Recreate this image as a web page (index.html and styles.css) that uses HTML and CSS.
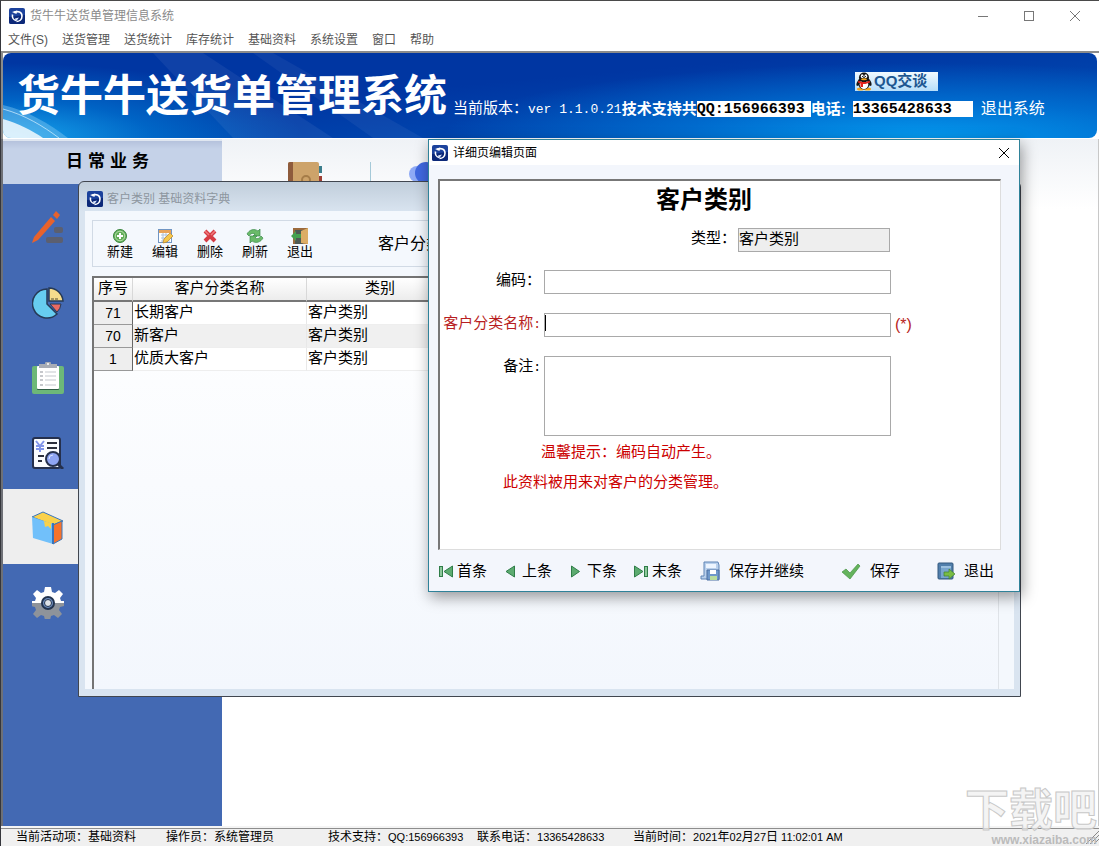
FILE: index.html
```
<!DOCTYPE html>
<html lang="zh-CN">
<head>
  <meta charset="utf-8">
  <title>货牛牛送货单管理信息系统</title>
  <link rel="stylesheet" href="styles.css">
</head>
<body>
  <!-- shared application logo -->
  <svg class="defs" width="0" height="0">
    <symbol id="app-logo" viewBox="0 0 16 16">
      <rect width="16" height="16" rx="2" fill="#1c429c"/>
      <path d="M0 9 16 7v7a2 2 0 0 1-2 2H2a2 2 0 0 1-2-2z" fill="#0c2878"/>
      <path d="M5 4.500C9 2.500 13 4 13 8s-3 5.500-5.500 5.500" fill="none" stroke="#fff" stroke-width="1.600"/>
      <path d="M3.500 6.500C3 9.500 4.500 12 7 12.500" fill="none" stroke="#fff" stroke-width="1.600"/>
      <path d="M3 4 8 2.500 7.500 6z" fill="#fff"/>
      <path d="M10 9.500 7 13.500l-1-3z" fill="#dce8ff"/>
    </symbol>
  </svg>

  <div class="app">
    <header class="titlebar">
      <svg class="logo"><use href="#app-logo"/></svg>
      <h1 class="app-title">货牛牛送货单管理信息系统</h1>
      <div class="window-buttons">
        <button type="button" aria-label="最小化"><svg width="12" height="12"><path d="M1 6.500h10" stroke="#777"/></svg></button>
        <button type="button" aria-label="最大化"><svg width="12" height="12"><rect x="1.500" y="1.500" width="9" height="9" fill="none" stroke="#777"/></svg></button>
        <button type="button" aria-label="关闭"><svg width="12" height="12"><path d="m1 1 10 10M11 1 1 11" stroke="#777"/></svg></button>
      </div>
    </header>

    <nav class="menubar">
      <a href="#">文件(S)</a>
      <a href="#">送货管理</a>
      <a href="#">送货统计</a>
      <a href="#">库存统计</a>
      <a href="#">基础资料</a>
      <a href="#">系统设置</a>
      <a href="#">窗口</a>
      <a href="#">帮助</a>
    </nav>

    <div class="banner-wrap">
      <section class="banner">
        <svg class="banner-light" viewBox="0 0 460 85" preserveAspectRatio="none">
          <path d="M150 0h50l130 85H230z" fill="#fff" opacity=".06"/>
          <path d="M250 0h20l150 85h-50z" fill="#fff" opacity=".05"/>
          <path d="M0 52C25 58 45 70 65 85H0z" fill="#8fd0f4" opacity=".4"/>
          <path d="M0 66C15 70 30 78 40 85H0z" fill="#fff" opacity=".8"/>
          <path d="M0 56C22 62 40 73 56 85" fill="none" stroke="#d8f2ff" opacity=".7"/>
        </svg>
        <h2 class="banner-title">货牛牛送货单管理系统</h2>
        <div class="banner-info">
          <a class="qq-chat" href="#">
            <svg width="18" height="19" viewBox="0 0 18 19">
              <ellipse cx="5.500" cy="17" rx="3.500" ry="1.500" fill="#f3a51c"/>
              <ellipse cx="12.500" cy="17" rx="3.500" ry="1.500" fill="#f3a51c"/>
              <path d="M4 7C1 11 1 13 2 14c1 0 2-1 2-1h10s1 1 2 1c1-1 1-4-2-7z" fill="#151515"/>
              <ellipse cx="9" cy="11" rx="6" ry="6.500" fill="#151515"/>
              <ellipse cx="9" cy="12.500" rx="4.300" ry="4.600" fill="#fff"/>
              <ellipse cx="9" cy="5.500" rx="5" ry="5" fill="#151515"/>
              <ellipse cx="7.200" cy="4.200" rx="1.400" ry="1.900" fill="#fff"/>
              <ellipse cx="10.800" cy="4.200" rx="1.400" ry="1.900" fill="#fff"/>
              <circle cx="7.600" cy="4.500" r=".6"/><circle cx="10.400" cy="4.500" r=".6"/>
              <ellipse cx="9" cy="7.200" rx="3" ry="1" fill="#f3a51c"/>
              <path d="M3.500 8.500c3 2 8 2 11 0l.5 2c-2 1-5 1.700-7 1.500v3H5.500v-3.500L3 10.500z" fill="#e3231d"/>
            </svg>
            <span>QQ交谈</span>
          </a>
          <div class="banner-line">
            <span class="version">当前版本：<span class="mono">ver 1.1.0.21</span></span>
            <b class="support">技术支持共</b>
            <span class="number-box qq">QQ:156966393</span>
            <b class="phone">电话:</b>
            <span class="number-box tel">13365428633</span>
            <a class="logout" href="#">退出系统</a>
          </div>
        </div>
      </section>
    </div>

    <main class="desktop">
      <aside class="sidebar">
        <h3 class="sidebar-title">日常业务</h3>
        <nav class="sidebar-nav">
          <a href="#" aria-label="送货管理">
            <svg width="32" height="34" viewBox="0 0 32 34">
              <path d="M0 32 2 26 19 6l4 4L6 29z" fill="#e8622c"/>
              <path d="m21 4 3-4 4 4-3 4z" fill="#e8622c"/>
              <rect x="22" y="16" width="9" height="6" rx="2" fill="#5b5f70"/>
              <rect x="14" y="26" width="17" height="6" rx="2" fill="#5b5f70"/>
            </svg>
          </a>
          <a href="#" aria-label="送货统计">
            <svg width="32" height="32" viewBox="0 0 32 32">
              <path d="M15 2A14.500 14.500 0 1 0 25 27L15 17z" fill="#67cdf0" stroke="#263a57" stroke-width="1.500"/>
              <path d="M17 1v13h14A14 14 0 0 0 17 1z" fill="#f6dc8c" stroke="#263a57" stroke-width="1.500"/>
              <path d="M18 17h11a12 12 0 0 1-4 8z" fill="#ea6a62" stroke="#263a57"/>
              <path d="M19 12h8" stroke="#8b7d4f" stroke-width="1.500" stroke-dasharray="3 1"/>
            </svg>
          </a>
          <a href="#" aria-label="库存统计">
            <svg width="32" height="32" viewBox="0 0 32 32">
              <rect x="0" y="4" width="32" height="28" rx="2" fill="#6db878"/>
              <rect x="5" y="5" width="22" height="23" rx="1" fill="#315e46"/>
              <rect x="5" y="4" width="22" height="23" rx="1" fill="#fff"/>
              <path d="M7 2h6a3 3 0 0 1 6 0h6v4H7z" fill="#a7acb5"/>
              <circle cx="16" cy="2" r="1" fill="#fff"/>
              <path d="M8 10h3M8 14h3M8 18h3M8 23h3" stroke="#c6c8cc" stroke-width="2"/>
              <path d="M13 10h11M13 14h11M13 18h11M13 23h11" stroke="#d8dade" stroke-width="1.500"/>
            </svg>
          </a>
          <a href="#" aria-label="基础资料">
            <svg width="32" height="32" viewBox="0 0 32 32">
              <rect x="1" y="1" width="27" height="30" rx="2" fill="#fafcff" stroke="#25304d" stroke-width="2"/>
              <path d="m4 4 4 5 4-5M8 9v6M4 9h8M4 12h8" fill="none" stroke="#8195ea" stroke-width="2"/>
              <path d="M15 6h10M15 11h10M6 19h6M6 24h4" stroke="#2b2f3d" stroke-width="2"/>
              <path d="m25 26 6 6" stroke="#25304d" stroke-width="3"/>
              <circle cx="21" cy="22" r="7" fill="#8fa5f3" stroke="#25304d" stroke-width="2"/>
              <path d="M17 22a4 4 0 0 1 4-4" fill="none" stroke="#dce4ff"/>
            </svg>
          </a>
          <a class="active" href="#" aria-label="资料字典">
            <svg width="32" height="34" viewBox="0 0 32 34">
              <path d="M0 6 11 1l20 9-10 4z" fill="#fad14b" stroke="#3976bd"/>
              <path d="M0 6 21 13v20L1 27z" fill="#71c0fa"/>
              <path d="m21 14 9-4v18l-9 5z" fill="#f7732b" stroke="#3976bd"/>
              <path d="M21 12v21" stroke="#3976bd" stroke-width="2"/>
              <path d="m12 10 7 2v6l-3-3-3 1z" fill="#fad14b"/>
            </svg>
          </a>
          <a href="#" aria-label="系统设置">
            <svg width="32" height="32" viewBox="0 0 32 32">
              <defs><linearGradient id="gear" x2="0" y2="1"><stop offset=".5" stop-color="#fff"/><stop offset=".5" stop-color="#8e939a"/></linearGradient></defs>
              <path d="M13 0h6l1 5 3 1 4-3 4 4-3 4 1 3 3 0v5l-4 1-1 3 3 4-4 4-4-3-3 1-1 4h-5l-1-4-3-1-4 3-4-4 3-4-1-3-4-1v-5l4 0 1-3-3-4 4-4 4 3 3-1z" fill="url(#gear)"/>
              <circle cx="16" cy="16" r="6" fill="#6f8fc0" stroke="#23344f" stroke-width="2"/>
              <circle cx="16" cy="16" r="3.500" fill="#dfe3e8" stroke="#23344f"/>
            </svg>
          </a>
        </nav>
      </aside>

      <div class="workspace">
        <svg width="34" height="36" viewBox="0 0 34 36">
          <path d="M29 4h5v7h-5zM29 14h5v7h-5z" fill="#3b7d8c"/>
          <path d="M29 14h5v5h-5z" fill="#9c3f35"/>
          <rect width="31" height="36" rx="2" fill="#cda36a"/>
          <path d="M2 0h3v36H2a2 2 0 0 1-2-2V2a2 2 0 0 1 2-2z" fill="#8e5b3c"/>
          <circle cx="18" cy="18" r="4" fill="none" stroke="#a57c48" stroke-width="2"/>
        </svg>
        <span class="divider"></span>
        <svg width="40" height="36" viewBox="0 0 40 36">
          <circle cx="8" cy="12" r="8" fill="#8faaf5"/>
          <circle cx="17" cy="11" r="11" fill="#4068e0"/>
        </svg>
      </div>

      <!-- dictionary window -->
      <section class="dict-window">
        <header class="dict-titlebar">
          <svg class="logo"><use href="#app-logo"/></svg>
          <h3>客户类别 基础资料字典</h3>
        </header>
        <div class="dict-body">
          <div class="toolbar">
            <button type="button">
              <svg width="16" height="16"><circle cx="8" cy="8" r="6.500" fill="#62ae58" stroke="#3b8740"/><circle cx="8" cy="8" r="4.800" fill="none" stroke="#b7e0ad"/><path d="M8 5v6M5 8h6" stroke="#fff" stroke-width="2"/></svg>
              新建
            </button>
            <button type="button">
              <svg width="16" height="16"><rect x="1.500" y="1.500" width="13" height="13" fill="#fff" stroke="#7095c3"/><path d="M2 2h12v3H2z" fill="#e8a35b"/><path d="M4 7h9M4 10h9M4 13h9M6 5v9M9 5v9" stroke="#adc2dd"/><path d="m6 15 1-4 6-6 3 3-6 6z" fill="#f6c84c" stroke="#b88326" stroke-width=".7"/></svg>
              编辑
            </button>
            <button type="button">
              <svg width="16" height="16"><path d="m3 3 10 10M13 3 3 13" stroke="#d63c44" stroke-width="4"/><path d="m3 3 4 4M13 3 9 7" stroke="#ef7b7d" stroke-width="1.500"/></svg>
              删除
            </button>
            <button type="button">
              <svg width="18" height="16"><path d="M1 6c2-4 7-6 11-3l2-2v7H7l2-2C7 5 5 5 3 8z" fill="#6aba69" stroke="#3b8a4a" stroke-width=".7"/><path d="M17 10c-2 4-7 6-11 3l-2 2V8h7l-2 2c2 1 4 1 6-2z" fill="#6aba69" stroke="#3b8a4a" stroke-width=".7"/></svg>
              刷新
            </button>
            <button type="button">
              <svg width="18" height="16"><path d="M2 0h15v16H2z" fill="#9b6a3c"/><path d="M4 2h8v14H4z" fill="#4e5a54"/><path d="m10 3 7-3v16l-7-1z" fill="#dcad65"/><path d="m0 8 5-5v3h5v4H5v3z" fill="#45a04e"/></svg>
              退出
            </button>
            <span class="toolbar-label">客户分类名称：</span>
          </div>
          <div class="grid">
            <table>
              <thead>
                <tr><th class="no">序号</th><th class="name">客户分类名称</th><th class="type">类别</th><th></th></tr>
              </thead>
              <tbody>
                <tr><td class="no">71</td><td>长期客户</td><td>客户类别</td><td></td></tr>
                <tr class="alt"><td class="no">70</td><td>新客户</td><td>客户类别</td><td></td></tr>
                <tr><td class="no">1</td><td>优质大客户</td><td>客户类别</td><td></td></tr>
              </tbody>
            </table>
          </div>
        </div>
      </section>

      <!-- edit dialog -->
      <section class="dialog">
        <header class="dialog-titlebar">
          <svg class="logo"><use href="#app-logo"/></svg>
          <h3>详细页编辑页面</h3>
          <button type="button" aria-label="关闭"><svg width="12" height="12"><path d="m1 1 10 10M11 1 1 11" stroke="#000"/></svg></button>
        </header>
        <form class="panel">
          <h2>客户类别</h2>
          <div class="type-row">
            <label for="type">类型：</label>
            <input id="type" type="text" value="客户类别" readonly>
          </div>
          <div class="field">
            <label for="code">编码：</label>
            <input id="code" type="text">
          </div>
          <div class="field required">
            <label for="name">客户分类名称<span class="mono">:</span></label>
            <div class="input-wrap">
              <input id="name" type="text">
              <span class="caret"></span>
            </div>
            <span class="star">(*)</span>
          </div>
          <div class="field">
            <label for="remark">备注<span class="mono">:</span></label>
            <textarea id="remark"></textarea>
          </div>
          <p class="tip first">温馨提示：编码自动产生。</p>
          <p class="tip">此资料被用来对客户的分类管理。</p>
        </form>
        <footer class="dialog-buttons">
          <div class="record-nav">
            <button type="button"><svg width="16" height="16"><rect x="1.500" y="3.500" width="3" height="10" fill="#8cc79a" stroke="#2f7d48"/><path d="M14.500 3v11L6 8.500z" fill="#5cab70" stroke="#2f7d48"/></svg>首条</button>
            <button type="button"><svg width="16" height="16"><path d="M11.500 3v11L3 8.500z" fill="#5cab70" stroke="#2f7d48"/></svg>上条</button>
            <button type="button"><svg width="16" height="16"><path d="M3.500 3v11l8-5.500z" fill="#5cab70" stroke="#2f7d48"/></svg>下条</button>
            <button type="button"><svg width="16" height="16"><path d="M1.500 3v11L10 8.500z" fill="#5cab70" stroke="#2f7d48"/><rect x="11.500" y="3.500" width="3" height="10" fill="#8cc79a" stroke="#2f7d48"/></svg>末条</button>
          </div>
          <div class="save-nav">
            <button type="button">
              <svg width="20" height="20"><path d="M4 1h14l1 3v14H1v-3h3z" fill="#b9d0ec" stroke="#5f84b5"/><path d="M6 3h10v4H6z" fill="#edf5ff"/><path d="M7 9h12v10H7z" fill="#6f98ca" stroke="#4a6fa1"/><path d="M10 9h6v4h-6z" fill="#fff"/><path d="M10 15h7v4h-7z" fill="#b9dc9d"/></svg>保存并继续
            </button>
            <button type="button">
              <svg width="20" height="20"><path d="m1 11 4-3 4 4 8-9 2 2L9 18z" fill="#64b35c" stroke="#479245" stroke-width=".7"/></svg>保存
            </button>
            <button type="button">
              <svg width="18" height="20"><rect x="1" y="2" width="15" height="16" rx="1" fill="#517fac" stroke="#32587f"/><path d="M4 5h10v12H4z" fill="#78a5cd"/><path d="M4 5h10v2H4z" fill="#9bc0df"/><path d="M7 11h5V8l6 5-6 5v-3H7z" fill="#79bc43" stroke="#40832f" stroke-width=".7"/></svg>退出
            </button>
          </div>
        </footer>
      </section>
    </main>

    <footer class="statusbar">
      <span class="activity">当前活动项：基础资料</span>
      <span class="operator">操作员：系统管理员</span>
      <span class="contact">技术支持：<span class="latin">QQ:156966393</span></span>
      <span class="contact-tel">联系电话：<span class="latin">13365428633</span></span>
      <span>当前时间：<span class="latin">2021</span>年<span class="latin">02</span>月<span class="latin">27</span>日<span class="latin"> 11:02:01 AM</span></span>
      <svg class="grip" width="14" height="14"><path d="M1 14 14 1M5 14l9-9M9 14l5-5" stroke="#888"/></svg>
    </footer>

    <div class="watermark">
      <span class="mark-name">下载吧</span>
      <span class="mark-url">www.xiazaiba.com</span>
    </div>
  </div>
</body>
</html>
```
FILE: styles.css
```
* {
  box-sizing: border-box;
}

body {
  margin: 0;
  font-family: "Liberation Sans", "Noto Sans CJK SC", sans-serif;
  font-size: 15px;
  line-height: 20px;
  color: #000;
}

h1, h2, h3, p {
  margin: 0;
  font-weight: normal;
}

a {
  color: inherit;
  text-decoration: none;
}

button {
  padding: 0;
  border: none;
  background: transparent;
  font: inherit;
  color: inherit;
}

input, textarea {
  font: inherit;
  border: 1px solid #a9a9a9;
  border-radius: 0;
  padding: 0 1px;
  background: #fff;
}

.defs {
  position: absolute;
}

.logo {
  width: 16px;
  height: 16px;
}

.mono {
  font-family: "Liberation Mono", monospace;
  font-size: 13px;
}

.app {
  position: relative;
  display: flex;
  flex-direction: column;
  min-height: 100vh;
  overflow: hidden;
  border-left: 1px solid #35363c;
  border-top: 1px solid #4a4a4a;
  background: #fff;
}

/* Title bar and menu */
.titlebar {
  display: flex;
  align-items: center;
  gap: 5px;
  height: 29px;
  padding: 0 18px 0 8px;
}

.app-title {
  font-size: 12px;
  color: #8a8a8a;
}

.window-buttons {
  display: flex;
  gap: 34px;
  margin-left: auto;
}

.window-buttons button {
  display: flex;
}

.menubar {
  display: flex;
  gap: 14px;
  height: 21px;
  padding-left: 7px;
  font-size: 12px;
  line-height: 21px;
  color: #555;
}

/* Blue banner */
.banner-wrap {
  border-top: 2px solid #8b8b8b;
  border-left: 2px solid #8b8b8b;
  padding: 0 2px 1px 0;
}

.banner {
  position: relative;
  display: flex;
  align-items: center;
  height: 85px;
  padding-left: 14px;
  border-radius: 8px;
  overflow: hidden;
  color: #fff;
  background:
    radial-gradient(ellipse 300px 75px at 0 100%, #18a8ef, rgba(0, 130, 220, 0.6) 50%, transparent),
    radial-gradient(ellipse 480px 75px at 84% 100%, #0499ee, rgba(0, 130, 225, 0.6) 50%, transparent),
    linear-gradient(175deg, #0036a2 40%, #0055bb);
}

.banner-light {
  position: absolute;
  left: 0;
  top: 0;
  width: 460px;
  height: 100%;
}

.banner-title {
  position: relative;
  font-size: 43px;
  line-height: 60px;
  font-weight: bold;
  white-space: nowrap;
  margin-right: 6px;
}

.banner-info {
  position: relative;
  display: flex;
  flex-direction: column;
  align-items: flex-start;
  gap: 7px;
}

.qq-chat {
  display: flex;
  align-items: center;
  gap: 1px;
  width: 83px;
  height: 19px;
  margin-left: 402px;
  background: linear-gradient(#f2faff, #b5defa);
  color: #1d5791;
  font-size: 15px;
  font-weight: bold;
  white-space: nowrap;
}

.banner-line {
  display: flex;
  align-items: center;
  white-space: nowrap;
}

.support {
  width: 75px;
}

.number-box {
  height: 16px;
  line-height: 17px;
  background: #fff;
  color: #000;
  font-family: "Liberation Mono", monospace;
  font-weight: bold;
}

.number-box.qq {
  width: 114px;
}

.number-box.tel {
  width: 120px;
  margin-left: 2px;
}

.phone {
  width: 40px;
}

.logout {
  margin-left: 8px;
  font-size: 16px;
}

/* Desktop */
.desktop {
  position: relative;
  flex: 1;
  display: flex;
  min-height: 580px;
  border-left: 2px solid #6e7076;
  border-right: 1px solid #c8c8c8;
}

.sidebar {
  width: 219px;
  background: #4369b3;
}

.sidebar-title {
  height: 45px;
  border-top: 2px solid #dfe6f0;
  background: linear-gradient(#b5c2dc, #c5d2e8 8px);
  text-align: center;
  font-size: 17px;
  font-weight: bold;
  line-height: 42px;
  letter-spacing: 5px;
  padding-right: 5px;
}

.sidebar-nav {
  display: flex;
  flex-direction: column;
  padding-top: 5px;
}

.sidebar-nav a {
  display: flex;
  align-items: center;
  height: 75px;
  padding: 2px 0 0 29px;
}

.sidebar-nav .active {
  background: #eee;
}

.workspace {
  flex: 1;
  display: flex;
  align-items: flex-start;
  gap: 48px;
  padding: 23px 0 0 66px;
  background: linear-gradient(#eff2f6, #fff 70px);
}

.divider {
  width: 1px;
  height: 36px;
  background: #a5c9d8;
}

.workspace .divider + svg {
  margin-left: -10px;
}

/* Dictionary window */
.dict-window {
  position: absolute;
  left: 75px;
  right: 77px;
  top: 42px;
  height: 516px;
  display: flex;
  flex-direction: column;
  border: 1px solid #41464f;
  border-radius: 6px 6px 0 0;
  padding: 0 6px 7px;
  background: linear-gradient(#c1cedb, #d9e4f0 30px);
}

.dict-titlebar {
  display: flex;
  align-items: center;
  gap: 4px;
  height: 29px;
  padding: 5px 2px 0;
  font-size: 12px;
  color: #8d969f;
}

.dict-titlebar h3,
.dialog-titlebar h3 {
  font-size: 12px;
}

.dict-body {
  flex: 1;
  display: flex;
  flex-direction: column;
  gap: 9px;
  padding: 9px 15px 0 7px;
  background: #f4f8fd;
}

.toolbar {
  display: flex;
  align-items: center;
  gap: 19px;
  height: 47px;
  padding-left: 14px;
  border: 1px solid #d1dae5;
}

.toolbar button {
  display: flex;
  flex-direction: column;
  align-items: center;
  font-size: 13px;
  line-height: 16px;
}

.toolbar-label {
  margin-left: 46px;
  font-size: 16px;
}

.grid {
  flex: 1;
  border-left: 2px solid #747474;
  border-top: 2px solid #747474;
  border-right: 1px solid #dfe3e8;
  background: linear-gradient(#fff, #f3f7fd);
}

.grid table {
  width: 100%;
  border-collapse: separate;
  border-spacing: 0;
  table-layout: fixed;
}

.grid th {
  height: 24px;
  padding: 0 0 2px;
  font-weight: normal;
  background: linear-gradient(#fff, #ececec);
  border-right: 1px solid #d8d8d8;
  border-bottom: 2px solid #777;
}

.grid td {
  height: 23px;
  padding: 0 1px 2px;
  background: #fff;
  border-right: 1px solid #e8e8e8;
  border-bottom: 1px solid #eee;
}

.grid .alt td {
  background: #f0f0f0;
}

.grid th.no {
  width: 39px;
}

.grid th.name {
  width: 174px;
}

.grid th.type {
  width: 147px;
}

.grid td.no,
.grid .alt td.no {
  padding: 0;
  background: #eee;
  border-right: 1px solid #666;
  border-bottom: 1px solid #999;
  text-align: center;
  font-size: 14px;
}

/* Edit dialog */
.dialog {
  position: absolute;
  right: 78px;
  top: 0;
  width: 592px;
  display: flex;
  flex-direction: column;
  border: 1px solid #2f8299;
  background: #f3f6fc;
  box-shadow: 2px 5px 14px rgba(0, 0, 0, 0.4);
}

.dialog-titlebar {
  display: flex;
  align-items: center;
  gap: 5px;
  height: 25px;
  padding: 0 9px 0 3px;
  background: #fff;
}

.dialog-titlebar button {
  display: flex;
  margin-left: auto;
}

.panel {
  display: flex;
  flex-direction: column;
  min-height: 371px;
  margin: 14px 18px 0 9px;
  padding: 5px 0 20px 2px;
  border-top: 2px solid #777;
  border-left: 2px solid #777;
  border-right: 1px solid #ddd;
  border-bottom: 1px solid #ddd;
  background: #fff;
}

.panel h2 {
  padding-right: 34px;
  text-align: center;
  font-size: 24px;
  line-height: 28px;
  font-weight: bold;
}

.type-row {
  display: flex;
  justify-content: flex-end;
  gap: 2px;
  padding-right: 110px;
  margin: 14px 0 18px;
}

.type-row input {
  width: 152px;
  height: 24px;
  padding: 0 0 6px;
  background: #eee;
}

.field {
  display: grid;
  grid-template-columns: 99px 347px 1fr;
  column-gap: 3px;
  margin-bottom: 19px;
}

.field label {
  text-align: right;
}

.field input {
  width: 100%;
  height: 24px;
}

.field textarea {
  width: 100%;
  height: 80px;
  resize: none;
}

.required {
  color: #b81e22;
}

.star {
  padding-left: 1px;
  font-size: 16px;
  line-height: 24px;
}

.input-wrap {
  position: relative;
}

.caret {
  position: absolute;
  left: 1px;
  top: 2px;
  width: 1px;
  height: 16px;
  background: #000;
}

.tip {
  padding-left: 61px;
  line-height: 30px;
  color: #c00;
}

.tip.first {
  margin-top: -18px;
  padding-left: 99px;
}

.dialog-buttons {
  display: flex;
  align-items: center;
  gap: 18px;
  height: 41px;
  padding-left: 9px;
}

.dialog-buttons button {
  display: flex;
  align-items: center;
  gap: 3px;
  white-space: nowrap;
}

.record-nav {
  display: flex;
  gap: 16px;
}

.save-nav {
  display: flex;
  gap: 37px;
}

.save-nav button {
  gap: 9px;
}

/* Status bar */
.statusbar {
  display: flex;
  align-items: center;
  height: 20px;
  padding-left: 15px;
  border-top: 2px solid #f4f4f4;
  background: #f0f0f0;
  box-shadow: inset 0 1px #8d8d8d;
  font-size: 12px;
  white-space: nowrap;
}

.statusbar .latin {
  font-size: 11px;
  white-space: pre;
}

.activity {
  width: 150px;
}

.operator {
  width: 162px;
}

.contact {
  width: 149px;
}

.contact-tel {
  width: 156px;
}

.grip {
  margin-left: auto;
}

/* Watermark over the lower right corner */
.watermark {
  position: absolute;
  right: 2px;
  bottom: 0;
  display: flex;
  flex-direction: column;
  align-items: flex-end;
  color: rgba(240, 240, 240, 0.7);
  pointer-events: none;
}

.mark-name {
  font-size: 44px;
  line-height: 48px;
  font-weight: bold;
  -webkit-text-stroke: 1px #c8c8c8;
}

.mark-url {
  height: 11px;
  font-size: 12px;
  line-height: 11px;
  font-weight: bold;
  color: #bbb;
}
```
